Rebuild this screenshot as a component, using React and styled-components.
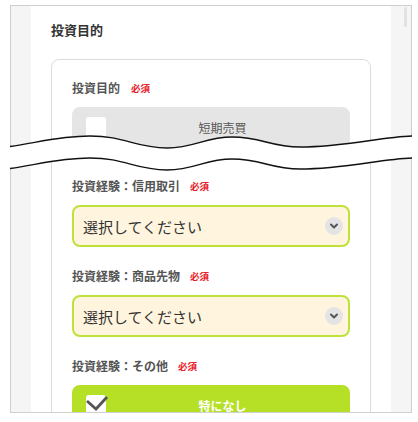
import React from 'react';
import styled, { createGlobalStyle } from 'styled-components';

const GlobalStyle = createGlobalStyle`
  body {
    margin: 0;
    background: #fff;
    font-family: "Noto Sans CJK JP", "Noto Sans", sans-serif;
  }
`;

const Page = styled.div`
  position: relative;
  width: 418px;
  height: 422px;
  padding: 5px 0 0 10px;
  box-sizing: border-box;
`;

const Frame = styled.div`
  display: flex;
  width: 402px;
  height: 408px;
  box-sizing: border-box;
  border: 1px solid #cfcfcf;
  overflow: hidden;
`;

const Gutter = styled.div`
  flex: 0 0 20px;
  background: #f5f5f5;
  display: flex;
  justify-content: flex-end;
  padding: 1px 4px 0 0;
  box-sizing: border-box;
`;

const ScrollThumb = styled.div`
  width: 3px;
  height: 20px;
  border-radius: 2px;
  background: #e2e2e2;
`;

const Main = styled.div`
  flex: 0 0 360px;
  padding: 14px 20px 0;
  box-sizing: border-box;
`;

const Heading = styled.h2`
  margin: 0 0 19px;
  height: 20px;
  font-size: 13px;
  line-height: 20px;
  font-weight: 700;
  color: #333;
`;

const Card = styled.div`
  display: flex;
  flex-direction: column;
  gap: 21px;
  border: 1px solid #dcdcdc;
  border-radius: 8px;
  padding: 20px 20px 40px;
`;

const Field = styled.div`
  display: flex;
  flex-direction: column;
  margin-bottom: ${(p) => p.$extra || 0}px;
`;

const Label = styled.div`
  display: flex;
  align-items: center;
  height: 16px;
  margin-bottom: 11px;
  font-size: 12px;
  line-height: 16px;
  font-weight: 700;
  color: #555;
`;

const Required = styled.span`
  margin-left: ${(p) => p.$gap || 11}px;
  font-size: 9.5px;
  font-weight: 700;
  color: #e8202a;
`;

const Option = styled.div`
  display: flex;
  align-items: center;
  height: 40px;
  padding-left: 14px;
  border-radius: 8px;
  background: ${(p) => (p.$checked ? '#b5e025' : '#e5e5e5')};
`;

const Checkbox = styled.span`
  position: relative;
  flex: 0 0 20px;
  height: 20px;
  border-radius: 3px;
  background: #fff;
`;

const CheckMark = styled.svg`
  position: absolute;
  left: 0;
  top: 0;
  overflow: visible;
`;

const OptionText = styled.span`
  flex: 1;
  padding-right: 11px;
  text-align: center;
  font-size: 12px;
  font-weight: ${(p) => (p.$checked ? 700 : 400)};
  color: ${(p) => (p.$checked ? '#fff' : '#555')};
`;

const Select = styled.div`
  display: flex;
  align-items: center;
  height: 42px;
  box-sizing: border-box;
  padding: 0 5px 0 9px;
  border: 2px solid #bfe23a;
  border-radius: 8px;
  background: #fff4dd;
`;

const SelectText = styled.span`
  flex: 1;
  font-size: 15px;
  color: #333;
`;

const Chevron = styled.span`
  display: flex;
  align-items: center;
  justify-content: center;
  width: 18px;
  height: 18px;
  border-radius: 50%;
  background: #e4e4e4;
`;

const WaveBreak = styled.svg`
  position: absolute;
  left: 0;
  top: 130px;
  width: 418px;
  height: 45px;
`;

const topCurve = 'M10,16.5 C40,12 60,6 90,6 C125,6 135,18 167,18 C195,18 205,7 232,7 C262,7 270,17 300,17 C345,17 380,7 412,6';
const bottomCurve = 'M10,38.5 C40,34 60,28 90,28 C125,28 135,40 167,40 C195,40 205,29 232,29 C262,29 270,39 300,39 C345,39 380,29 412,28';
const bandFill = `${topCurve} L418,6 L418,28 L412,28 C380,29 345,39 300,39 C270,39 262,29 232,29 C205,29 195,40 167,40 C135,40 125,28 90,28 C60,28 40,34 10,38.5 L0,38.5 L0,16.5 Z`;

function SelectBox() {
  return (
    <Select>
      <SelectText>選択してください</SelectText>
      <Chevron>
        <svg width="10" height="10" viewBox="0 0 10 10">
          <polyline points="2,3.5 5,6.5 8,3.5" fill="none" stroke="#555" strokeWidth="2" strokeLinecap="round" strokeLinejoin="round" />
        </svg>
      </Chevron>
    </Select>
  );
}

export default function App() {
  return (
    <Page>
      <GlobalStyle />
      <Frame>
        <Gutter />
        <Main>
          <Heading>投資目的</Heading>
          <Card>
            <Field $extra={10}>
              <Label>
                投資目的
                <Required>必須</Required>
              </Label>
              <Option>
                <Checkbox />
                <OptionText>短期売買</OptionText>
              </Option>
            </Field>
            <Field>
              <Label>
                投資経験：信用取引
                <Required $gap={10}>必須</Required>
              </Label>
              <SelectBox />
            </Field>
            <Field>
              <Label>
                投資経験：商品先物
                <Required $gap={10}>必須</Required>
              </Label>
              <SelectBox />
            </Field>
            <Field>
              <Label>
                投資経験：その他
                <Required $gap={10}>必須</Required>
              </Label>
              <Option $checked>
                <Checkbox>
                  <CheckMark width="20" height="20" viewBox="0 0 20 20">
                    <polyline points="1,6 10,14 21,2" fill="none" stroke="#555" strokeWidth="2.8" strokeLinejoin="miter" />
                  </CheckMark>
                </Checkbox>
                <OptionText $checked>特になし</OptionText>
              </Option>
            </Field>
          </Card>
        </Main>
        <Gutter>
          <ScrollThumb />
        </Gutter>
      </Frame>
      <WaveBreak viewBox="0 0 418 45">
        <path d={bandFill} fill="#fff" />
        <path d={topCurve} fill="none" stroke="#111" strokeWidth="1.3" />
        <path d={bottomCurve} fill="none" stroke="#111" strokeWidth="1.3" />
      </WaveBreak>
    </Page>
  );
}
